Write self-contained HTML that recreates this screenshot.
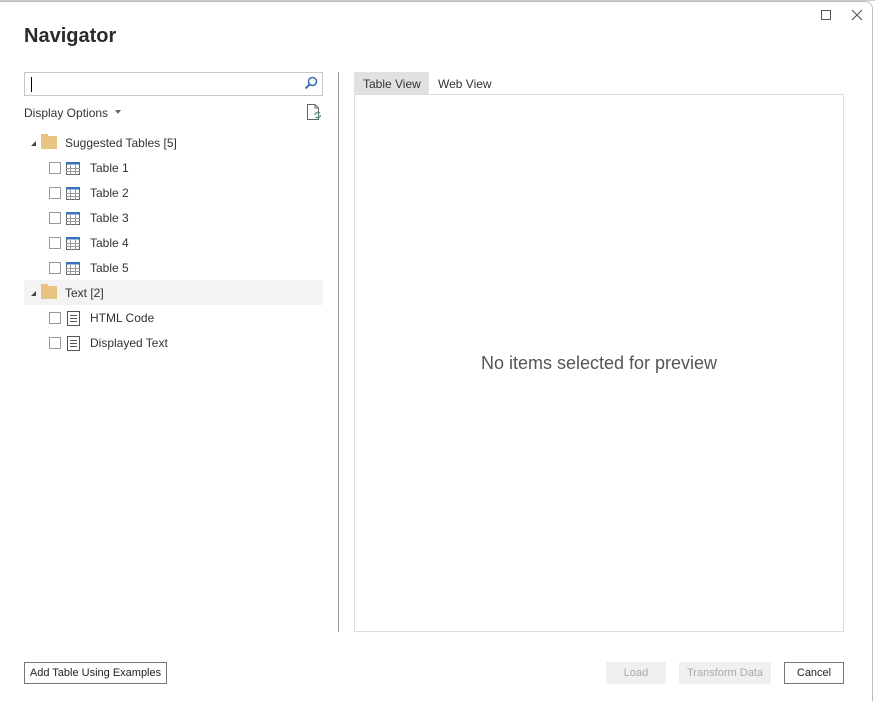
<!DOCTYPE html>
<html><head><style>
*{box-sizing:border-box;margin:0;padding:0}
body{width:875px;height:701px;background:#fff;font-family:"Liberation Sans",sans-serif;font-size:12px;color:#333;position:relative;overflow:hidden}
.a{position:absolute}
.win{left:0;top:1px;width:873px;height:700px;border-top:1px solid #bbb;border-right:1px solid #bbb;border-top-right-radius:8px}
.cb{width:12px;height:12px;border:1px solid #999;background:#fff}
.lbl{font-size:12px;color:#333}
.btn{height:22px;font-size:11px;display:flex;align-items:center;justify-content:center}
</style></head><body>
<div class="a win"></div>
<div class="a" style="left:0;top:0;width:875px;height:1px;background:#ccc"></div>
<div class="a" style="left:821px;top:10px;width:10px;height:10px;border:1px solid #555"></div>
<svg class="a" style="left:851px;top:9px" width="12" height="12"><path d="M1 1L11 11M11 1L1 11" stroke="#555" stroke-width="1.1"/></svg>
<div class="a" style="left:24px;top:25px;font-size:20px;font-weight:bold;color:#2a2a2a">Navigator</div>
<div class="a" style="left:24px;top:72px;width:299px;height:24px;border:1px solid #c8c8c8"></div>
<div class="a" style="left:31px;top:77px;width:1px;height:15px;background:#000"></div>
<svg class="a" style="left:304px;top:76px" width="14" height="14"><circle cx="8.5" cy="5.5" r="4" fill="none" stroke="#3a72b8" stroke-width="1.6"/><path d="M6 8L1.5 12.5" stroke="#3a72b8" stroke-width="2"/></svg>
<div class="a lbl" style="left:24px;top:106px">Display Options</div>
<div class="a" style="left:115px;top:110px;border-left:3px solid transparent;border-right:3px solid transparent;border-top:4px solid #666"></div>
<svg class="a" style="left:306px;top:103px" width="16" height="18"><path d="M1.5 1.5H9L12.5 5V16.5H1.5Z M9 1.5V5H12.5" fill="none" stroke="#666"/><path d="M9 12a3 3 0 0 1 5-2M14.5 12a3 3 0 0 1-5 2" fill="none" stroke="#3a9a6a" stroke-width="1.2"/></svg>
<div class="a" style="left:24px;top:280px;width:299px;height:25px;background:#f3f3f3"></div>
<div id="tree"></div>
<div class="a" style="left:338px;top:72px;width:1px;height:560px;background:#999"></div>
<div class="a" style="left:354px;top:72px;width:75px;height:23px;background:#e1e1e1"></div>
<div class="a lbl" style="left:363px;top:77px">Table View</div>
<div class="a lbl" style="left:438px;top:77px">Web View</div>
<div class="a" style="left:354px;top:94px;width:490px;height:538px;border:1px solid #ddd"></div>
<div class="a" style="left:354px;top:353px;width:490px;text-align:center;font-size:18px;color:#555">No items selected for preview</div>
<div class="a btn" style="left:24px;top:662px;width:143px;border:1px solid #777;color:#222">Add Table Using Examples</div>
<div class="a btn" style="left:606px;top:662px;width:60px;background:#f0f0f0;color:#aaa">Load</div>
<div class="a btn" style="left:679px;top:662px;width:92px;background:#f0f0f0;color:#aaa">Transform Data</div>
<div class="a btn" style="left:784px;top:662px;width:60px;border:1px solid #777;color:#222">Cancel</div>
<script>
var h='';
function folder(y,t){h+='<div class="a" style="left:31px;top:'+(y-2)+'px;border-left:5px solid transparent;border-bottom:5px solid #444"></div>';
h+='<div class="a" style="left:41px;top:'+(y-7)+'px;width:16px;height:13px;background:#e8c382"></div><div class="a" style="left:41px;top:'+(y-9)+'px;width:7px;height:3px;background:#e8c382"></div>';
h+='<div class="a lbl" style="left:65px;top:'+(y-7)+'px">'+t+'</div>';}
function item(y,t,tbl){h+='<div class="a cb" style="left:49px;top:'+(y-6)+'px"></div>';
if(tbl)h+='<svg class="a" style="left:66px;top:'+(y-6)+'px" width="14" height="13"><rect x="0.5" y="0.5" width="13" height="12" fill="#fff" stroke="#666"/><rect x="0" y="0" width="14" height="2.5" fill="#3a72b8"/><path d="M0 6.5H14M0 9.5H14M4.5 3V13M9.5 3V13" stroke="#999"/></svg>';
else h+='<svg class="a" style="left:67px;top:'+(y-7)+'px" width="13" height="15"><rect x="0.5" y="0.5" width="12" height="14" fill="#fff" stroke="#555"/><path d="M3 4.5H10M3 7.5H10M3 10.5H10" stroke="#555"/></svg>';
h+='<div class="a lbl" style="left:90px;top:'+(y-7)+'px">'+t+'</div>';}
folder(143,'Suggested Tables [5]');
for(var i=1;i<=5;i++)item(143+25*i,'Table '+i,1);
folder(293,'Text [2]');item(318,'HTML Code',0);item(343,'Displayed Text',0);
document.getElementById('tree').innerHTML=h;
</script>
</body></html>
